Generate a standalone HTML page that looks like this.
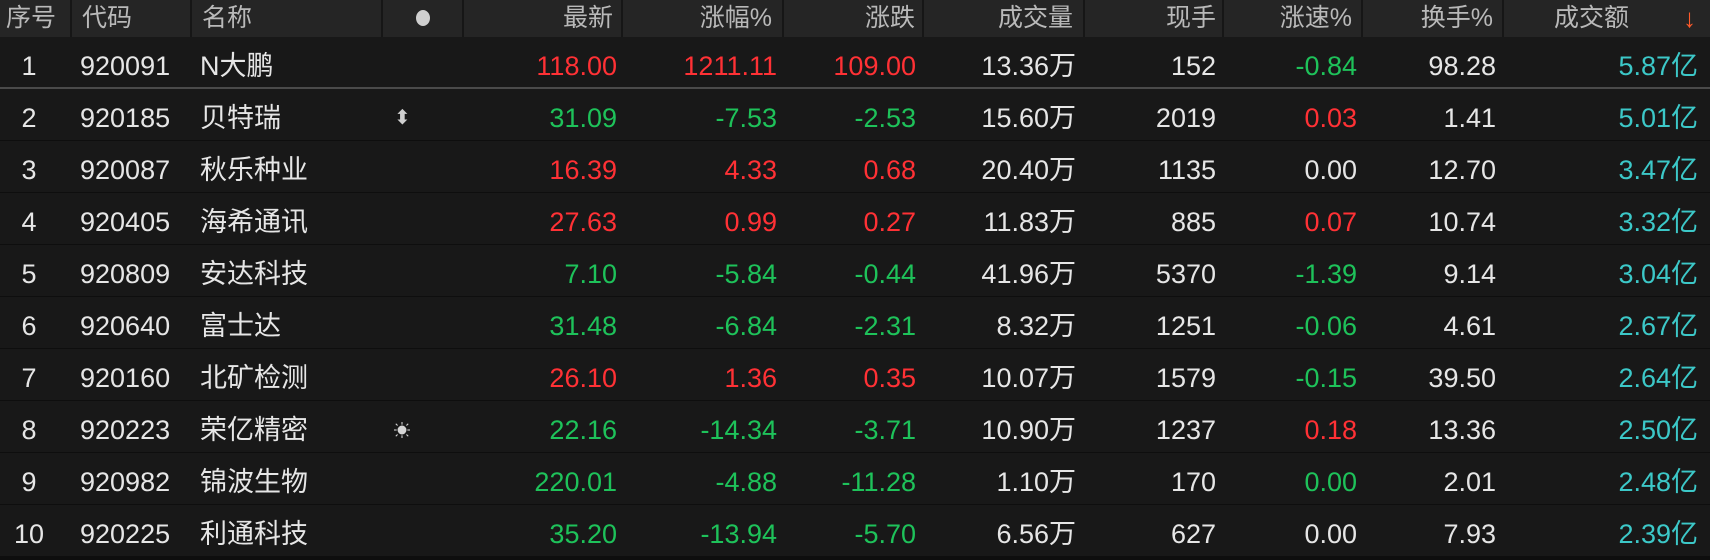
<!DOCTYPE html>
<html><head><meta charset="utf-8"><style>
html,body{margin:0;padding:0;background:#0e0e0e;}
body{width:1710px;height:560px;position:relative;overflow:hidden;font-family:"Liberation Sans","Noto Sans CJK SC",sans-serif;}
.hd{position:absolute;left:0;top:0;width:1710px;height:37px;background:#252525;}
.sep{position:absolute;top:0;width:2px;height:37px;background:#161616;}
.h{position:absolute;top:0;line-height:36px;font-size:25px;color:#b9b9b9;white-space:nowrap;}
.row{position:absolute;left:0;width:1710px;height:51px;background:#181818;}
.c{position:absolute;top:0;line-height:51px;font-size:27px;color:#e6e6e6;white-space:nowrap;padding-top:4px;}
.n{left:0;width:58px;text-align:center;}
.r{text-align:right;}
.red{color:#ff3135;}.grn{color:#1ec25a;}.tl{color:#3cc8c8;}
</style></head><body>
<div class="hd"></div>
<div class="sep" style="left:70px"></div><div class="sep" style="left:190px"></div><div class="sep" style="left:381px"></div><div class="sep" style="left:462px"></div><div class="sep" style="left:621px"></div><div class="sep" style="left:782px"></div><div class="sep" style="left:922px"></div><div class="sep" style="left:1083px"></div><div class="sep" style="left:1222px"></div><div class="sep" style="left:1361px"></div><div class="sep" style="left:1502px"></div>
<div class="h" style="left:6px">序号</div>
<div class="h" style="left:82px">代码</div>
<div class="h" style="left:202px">名称</div>
<div style="position:absolute;left:416px;top:10px;width:14px;height:16px;border-radius:50%;background:#cfcfcf"></div>
<div class="h" style="right:1097px">最新</div>
<div class="h" style="right:938px">涨幅%</div>
<div class="h" style="right:795px">涨跌</div>
<div class="h" style="right:637px">成交量</div>
<div class="h" style="right:494px">现手</div>
<div class="h" style="right:358px">涨速%</div>
<div class="h" style="right:217px">换手%</div>
<div class="h" style="right:81px">成交额</div>
<div class="h" style="right:14px;color:#ff5a2a;font-size:26px">↓</div>

<div class="row" style="top:37px"><div class="c n">1</div><div class="c" style="left:80px">920091</div><div class="c" style="left:200px">N大鹏</div><div class="c r red" style="right:1093px">118.00</div><div class="c r red" style="right:933px">1211.11</div><div class="c r red" style="right:794px">109.00</div><div class="c r" style="right:634px">13.36万</div><div class="c r" style="right:494px">152</div><div class="c r grn" style="right:353px">-0.84</div><div class="c r" style="right:214px">98.28</div><div class="c r tl" style="right:12px">5.87亿</div></div>
<div style="position:absolute;left:0;top:87px;width:1710px;height:2px;background:#4a4a4a"></div>
<div class="row" style="top:89px"><div class="c n">2</div><div class="c" style="left:80px">920185</div><div class="c" style="left:200px">贝特瑞</div><div class="c" style="left:394px;color:#cfcfcf;font-size:20px">⬍</div><div class="c r grn" style="right:1093px">31.09</div><div class="c r grn" style="right:933px">-7.53</div><div class="c r grn" style="right:794px">-2.53</div><div class="c r" style="right:634px">15.60万</div><div class="c r" style="right:494px">2019</div><div class="c r red" style="right:353px">0.03</div><div class="c r" style="right:214px">1.41</div><div class="c r tl" style="right:12px">5.01亿</div></div>
<div class="row" style="top:141px"><div class="c n">3</div><div class="c" style="left:80px">920087</div><div class="c" style="left:200px">秋乐种业</div><div class="c r red" style="right:1093px">16.39</div><div class="c r red" style="right:933px">4.33</div><div class="c r red" style="right:794px">0.68</div><div class="c r" style="right:634px">20.40万</div><div class="c r" style="right:494px">1135</div><div class="c r" style="right:353px">0.00</div><div class="c r" style="right:214px">12.70</div><div class="c r tl" style="right:12px">3.47亿</div></div>
<div class="row" style="top:193px"><div class="c n">4</div><div class="c" style="left:80px">920405</div><div class="c" style="left:200px">海希通讯</div><div class="c r red" style="right:1093px">27.63</div><div class="c r red" style="right:933px">0.99</div><div class="c r red" style="right:794px">0.27</div><div class="c r" style="right:634px">11.83万</div><div class="c r" style="right:494px">885</div><div class="c r red" style="right:353px">0.07</div><div class="c r" style="right:214px">10.74</div><div class="c r tl" style="right:12px">3.32亿</div></div>
<div class="row" style="top:245px"><div class="c n">5</div><div class="c" style="left:80px">920809</div><div class="c" style="left:200px">安达科技</div><div class="c r grn" style="right:1093px">7.10</div><div class="c r grn" style="right:933px">-5.84</div><div class="c r grn" style="right:794px">-0.44</div><div class="c r" style="right:634px">41.96万</div><div class="c r" style="right:494px">5370</div><div class="c r grn" style="right:353px">-1.39</div><div class="c r" style="right:214px">9.14</div><div class="c r tl" style="right:12px">3.04亿</div></div>
<div class="row" style="top:297px"><div class="c n">6</div><div class="c" style="left:80px">920640</div><div class="c" style="left:200px">富士达</div><div class="c r grn" style="right:1093px">31.48</div><div class="c r grn" style="right:933px">-6.84</div><div class="c r grn" style="right:794px">-2.31</div><div class="c r" style="right:634px">8.32万</div><div class="c r" style="right:494px">1251</div><div class="c r grn" style="right:353px">-0.06</div><div class="c r" style="right:214px">4.61</div><div class="c r tl" style="right:12px">2.67亿</div></div>
<div class="row" style="top:349px"><div class="c n">7</div><div class="c" style="left:80px">920160</div><div class="c" style="left:200px">北矿检测</div><div class="c r red" style="right:1093px">26.10</div><div class="c r red" style="right:933px">1.36</div><div class="c r red" style="right:794px">0.35</div><div class="c r" style="right:634px">10.07万</div><div class="c r" style="right:494px">1579</div><div class="c r grn" style="right:353px">-0.15</div><div class="c r" style="right:214px">39.50</div><div class="c r tl" style="right:12px">2.64亿</div></div>
<div class="row" style="top:401px"><div class="c n">8</div><div class="c" style="left:80px">920223</div><div class="c" style="left:200px">荣亿精密</div>
<svg style="position:absolute;left:394px;top:21px" width="16" height="16" viewBox="0 0 18 18"><circle cx="9" cy="9" r="5" fill="#d6d6d6"/><g stroke="#d6d6d6" stroke-width="1.2"><line x1="9" y1="0" x2="9" y2="3"/><line x1="9" y1="15" x2="9" y2="18"/><line x1="0" y1="9" x2="3" y2="9"/><line x1="15" y1="9" x2="18" y2="9"/><line x1="2" y1="2" x2="4" y2="4"/><line x1="14" y1="14" x2="16" y2="16"/><line x1="16" y1="2" x2="14" y2="4"/><line x1="2" y1="16" x2="4" y2="14"/></g></svg>
<div class="c r grn" style="right:1093px">22.16</div><div class="c r grn" style="right:933px">-14.34</div><div class="c r grn" style="right:794px">-3.71</div><div class="c r" style="right:634px">10.90万</div><div class="c r" style="right:494px">1237</div><div class="c r red" style="right:353px">0.18</div><div class="c r" style="right:214px">13.36</div><div class="c r tl" style="right:12px">2.50亿</div></div>
<div class="row" style="top:453px"><div class="c n">9</div><div class="c" style="left:80px">920982</div><div class="c" style="left:200px">锦波生物</div><div class="c r grn" style="right:1093px">220.01</div><div class="c r grn" style="right:933px">-4.88</div><div class="c r grn" style="right:794px">-11.28</div><div class="c r" style="right:634px">1.10万</div><div class="c r" style="right:494px">170</div><div class="c r grn" style="right:353px">0.00</div><div class="c r" style="right:214px">2.01</div><div class="c r tl" style="right:12px">2.48亿</div></div>
<div class="row" style="top:505px"><div class="c n">10</div><div class="c" style="left:80px">920225</div><div class="c" style="left:200px">利通科技</div><div class="c r grn" style="right:1093px">35.20</div><div class="c r grn" style="right:933px">-13.94</div><div class="c r grn" style="right:794px">-5.70</div><div class="c r" style="right:634px">6.56万</div><div class="c r" style="right:494px">627</div><div class="c r" style="right:353px">0.00</div><div class="c r" style="right:214px">7.93</div><div class="c r tl" style="right:12px">2.39亿</div></div>
</body></html>
